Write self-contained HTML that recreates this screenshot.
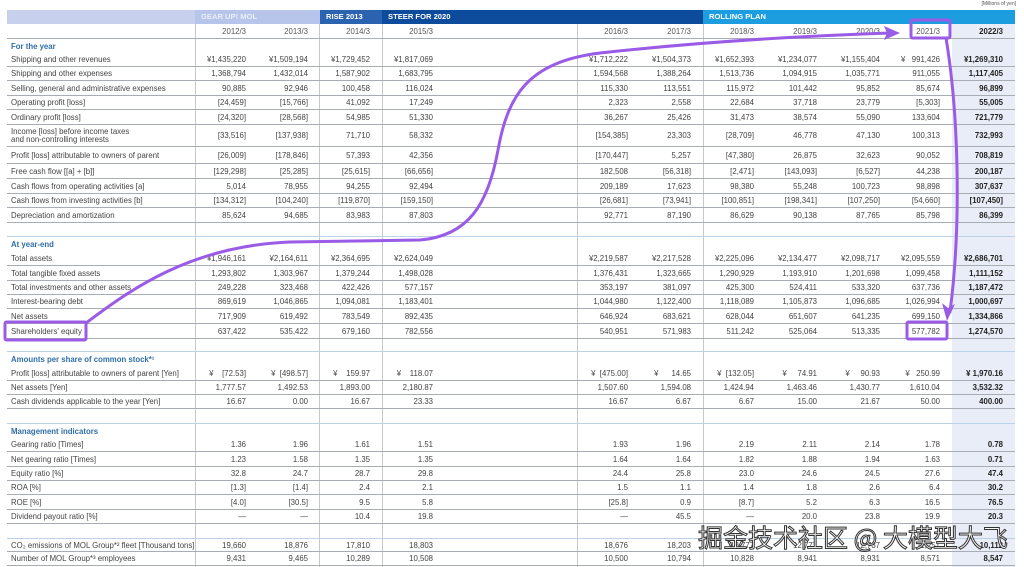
<!DOCTYPE html><html><head><meta charset="utf-8"><style>
*{margin:0;padding:0;box-sizing:border-box}
body{width:1024px;height:567px;background:#fff;position:relative;overflow:hidden;font-family:"Liberation Sans",sans-serif;font-size:7.8px;color:#444}
.r{position:absolute;left:7px;width:1008px;display:grid;grid-template-columns:188px 63px 62px 62px 63px 132px 63px 63px 63px 63px 63px 60px 63px;align-items:center;border-bottom:1px solid #a8adb4}
.r>span{text-align:right;padding-right:12px;white-space:nowrap}
.r>span:first-child{text-align:left;padding-left:4px}
.r>span:last-child{font-weight:bold;color:#222}
.nb{border-bottom:none}
.r>span.h{color:#2f6ea8 !important;font-weight:bold}
.vl{position:absolute;top:24px;height:543px;width:1px;background:#c4c8ce}
.band{position:absolute;top:10px;height:14px;color:#fff;font-weight:bold;font-size:7.6px;line-height:14px;padding-left:6px}
.sec{position:absolute;left:7px;width:1008px;height:1px;background:#bcd2e6}
.w{position:absolute;left:698px;top:519px;font-family:"Noto Sans CJK SC",sans-serif;font-size:25px;color:#fff;-webkit-text-stroke:1px #333;white-space:nowrap}
</style></head><body>
<div style="position:absolute;right:8px;top:1px;font-size:5px;color:#555">[Millions of yen]</div>
<div style="position:absolute;left:952px;top:24px;width:63px;height:543px;background:#e9edf8"></div>
<div class="band" style="left:7px;width:188px;background:#c7d1ee"></div>
<div class="band" style="left:195px;width:125px;background:#b7c5ea;color:#e8eefb">GEAR UP! MOL</div>
<div class="band" style="left:320px;width:62px;background:#2a63b0">RISE 2013</div>
<div class="band" style="left:382px;width:321px;background:#0d4c9c">STEER FOR 2020</div>
<div class="band" style="left:703px;width:312px;background:#1c9de0">ROLLING PLAN</div>
<div class="vl" style="left:195px"></div><div class="vl" style="left:319px"></div><div class="vl" style="left:382px"></div><div class="vl" style="left:577px"></div><div class="vl" style="left:703px"></div>

<div class="r" style="top:24px;height:15px;color:#555"><span></span><span>2012/3</span><span>2013/3</span><span>2014/3</span><span>2015/3</span><span></span><span>2016/3</span><span>2017/3</span><span>2018/3</span><span>2019/3</span><span>2020/3</span><span>2021/3</span><span>2022/3</span></div>
<div class="r nb" style="top:39px;height:14px"><span class="h">For the year</span></div>
<div class="r" style="top:53px;height:14px"><span>Shipping and other revenues</span><span>¥1,435,220</span><span>¥1,509,194</span><span>¥1,729,452</span><span>¥1,817,069</span><span></span><span>¥1,712,222</span><span>¥1,504,373</span><span>¥1,652,393</span><span>¥1,234,077</span><span>¥1,155,404</span><span>¥ &nbsp;&nbsp;991,426</span><span>¥1,269,310</span></div>
<div class="r" style="top:67px;height:14px"><span>Shipping and other expenses</span><span>1,368,794</span><span>1,432,014</span><span>1,587,902</span><span>1,683,795</span><span></span><span>1,594,568</span><span>1,388,264</span><span>1,513,736</span><span>1,094,915</span><span>1,035,771</span><span>911,055</span><span>1,117,405</span></div>
<div class="r" style="top:81px;height:15px"><span>Selling, general and administrative expenses</span><span>90,885</span><span>92,946</span><span>100,458</span><span>116,024</span><span></span><span>115,330</span><span>113,551</span><span>115,972</span><span>101,442</span><span>95,852</span><span>85,674</span><span>96,899</span></div>
<div class="r" style="top:96px;height:14px"><span>Operating profit [loss]</span><span>[24,459]</span><span>[15,766]</span><span>41,092</span><span>17,249</span><span></span><span>2,323</span><span>2,558</span><span>22,684</span><span>37,718</span><span>23,779</span><span>[5,303]</span><span>55,005</span></div>
<div class="r" style="top:110px;height:15px"><span>Ordinary profit [loss]</span><span>[24,320]</span><span>[28,568]</span><span>54,985</span><span>51,330</span><span></span><span>36,267</span><span>25,426</span><span>31,473</span><span>38,574</span><span>55,090</span><span>133,604</span><span>721,779</span></div>
<div class="r" style="top:125px;height:22px"><span style="line-height:8px">Income [loss] before income taxes<br>and non-controlling interests</span><span>[33,516]</span><span>[137,938]</span><span>71,710</span><span>58,332</span><span></span><span>[154,385]</span><span>23,303</span><span>[28,709]</span><span>46,778</span><span>47,130</span><span>100,313</span><span>732,993</span></div>
<div class="r" style="top:147px;height:17px"><span>Profit [loss] attributable to owners of parent</span><span>[26,009]</span><span>[178,846]</span><span>57,393</span><span>42,356</span><span></span><span>[170,447]</span><span>5,257</span><span>[47,380]</span><span>26,875</span><span>32,623</span><span>90,052</span><span>708,819</span></div>
<div class="r" style="top:164px;height:15px"><span>Free cash flow [[a] + [b]]</span><span>[129,298]</span><span>[25,285]</span><span>[25,615]</span><span>[66,656]</span><span></span><span>182,508</span><span>[56,318]</span><span>[2,471]</span><span>[143,093]</span><span>[6,527]</span><span>44,238</span><span>200,187</span></div>
<div class="r" style="top:179px;height:15px"><span>Cash flows from operating activities [a]</span><span>5,014</span><span>78,955</span><span>94,255</span><span>92,494</span><span></span><span>209,189</span><span>17,623</span><span>98,380</span><span>55,248</span><span>100,723</span><span>98,898</span><span>307,637</span></div>
<div class="r" style="top:194px;height:14px"><span>Cash flows from investing activities [b]</span><span>[134,312]</span><span>[104,240]</span><span>[119,870]</span><span>[159,150]</span><span></span><span>[26,681]</span><span>[73,941]</span><span>[100,851]</span><span>[198,341]</span><span>[107,250]</span><span>[54,660]</span><span>[107,450]</span></div>
<div class="r" style="top:208px;height:15px"><span>Depreciation and amortization</span><span>85,624</span><span>94,685</span><span>83,983</span><span>87,803</span><span></span><span>92,771</span><span>87,190</span><span>86,629</span><span>90,138</span><span>87,765</span><span>85,798</span><span>86,399</span></div>
<div class="sec" style="top:236px"></div>
<div class="r nb" style="top:237px;height:14px"><span class="h">At year-end</span></div>
<div class="r" style="top:251px;height:15px"><span>Total assets</span><span>¥1,946,161</span><span>¥2,164,611</span><span>¥2,364,695</span><span>¥2,624,049</span><span></span><span>¥2,219,587</span><span>¥2,217,528</span><span>¥2,225,096</span><span>¥2,134,477</span><span>¥2,098,717</span><span>¥2,095,559</span><span>¥2,686,701</span></div>
<div class="r" style="top:266px;height:15px"><span>Total tangible fixed assets</span><span>1,293,802</span><span>1,303,967</span><span>1,379,244</span><span>1,498,028</span><span></span><span>1,376,431</span><span>1,323,665</span><span>1,290,929</span><span>1,193,910</span><span>1,201,698</span><span>1,099,458</span><span>1,111,152</span></div>
<div class="r" style="top:281px;height:14px"><span>Total investments and other assets</span><span>249,228</span><span>323,468</span><span>422,426</span><span>577,157</span><span></span><span>353,197</span><span>381,097</span><span>425,300</span><span>524,411</span><span>533,320</span><span>637,736</span><span>1,187,472</span></div>
<div class="r" style="top:295px;height:14px"><span>Interest-bearing debt</span><span>869,619</span><span>1,046,865</span><span>1,094,081</span><span>1,183,401</span><span></span><span>1,044,980</span><span>1,122,400</span><span>1,118,089</span><span>1,105,873</span><span>1,096,685</span><span>1,026,994</span><span>1,000,697</span></div>
<div class="r" style="top:309px;height:15px"><span>Net assets</span><span>717,909</span><span>619,492</span><span>783,549</span><span>892,435</span><span></span><span>646,924</span><span>683,621</span><span>628,044</span><span>651,607</span><span>641,235</span><span>699,150</span><span>1,334,866</span></div>
<div class="r" style="top:324px;height:15px"><span>Shareholders' equity</span><span>637,422</span><span>535,422</span><span>679,160</span><span>782,556</span><span></span><span>540,951</span><span>571,983</span><span>511,242</span><span>525,064</span><span>513,335</span><span>577,782</span><span>1,274,570</span></div>
<div class="sec" style="top:351px"></div>
<div class="r nb" style="top:352px;height:14px"><span class="h">Amounts per share of common stock*¹</span></div>
<div class="r" style="top:366px;height:15px"><span>Profit [loss] attributable to owners of parent [Yen]</span><span>¥ &nbsp;&nbsp;&nbsp;[72.53]</span><span>¥ &nbsp;[498.57]</span><span>¥ &nbsp;&nbsp;&nbsp;159.97</span><span>¥ &nbsp;&nbsp;&nbsp;118.07</span><span></span><span>¥ &nbsp;[475.00]</span><span>¥ &nbsp;&nbsp;&nbsp;&nbsp;&nbsp;14.65</span><span>¥ &nbsp;[132.05]</span><span>¥ &nbsp;&nbsp;&nbsp;&nbsp;74.91</span><span>¥ &nbsp;&nbsp;&nbsp;&nbsp;90.93</span><span>¥ &nbsp;&nbsp;250.99</span><span>¥ 1,970.16</span></div>
<div class="r" style="top:381px;height:14px"><span>Net assets [Yen]</span><span>1,777.57</span><span>1,492.53</span><span>1,893.00</span><span>2,180.87</span><span></span><span>1,507.60</span><span>1,594.08</span><span>1,424.94</span><span>1,463.46</span><span>1,430.77</span><span>1,610.04</span><span>3,532.32</span></div>
<div class="r" style="top:395px;height:14px"><span>Cash dividends applicable to the year [Yen]</span><span>16.67</span><span>0.00</span><span>16.67</span><span>23.33</span><span></span><span>16.67</span><span>6.67</span><span>6.67</span><span>15.00</span><span>21.67</span><span>50.00</span><span>400.00</span></div>
<div class="sec" style="top:423px"></div>
<div class="r nb" style="top:424px;height:14px"><span class="h">Management indicators</span></div>
<div class="r" style="top:438px;height:14px"><span>Gearing ratio [Times]</span><span>1.36</span><span>1.96</span><span>1.61</span><span>1.51</span><span></span><span>1.93</span><span>1.96</span><span>2.19</span><span>2.11</span><span>2.14</span><span>1.78</span><span>0.78</span></div>
<div class="r" style="top:452px;height:15px"><span>Net gearing ratio [Times]</span><span>1.23</span><span>1.58</span><span>1.35</span><span>1.35</span><span></span><span>1.64</span><span>1.64</span><span>1.82</span><span>1.88</span><span>1.94</span><span>1.63</span><span>0.71</span></div>
<div class="r" style="top:467px;height:14px"><span>Equity ratio [%]</span><span>32.8</span><span>24.7</span><span>28.7</span><span>29.8</span><span></span><span>24.4</span><span>25.8</span><span>23.0</span><span>24.6</span><span>24.5</span><span>27.6</span><span>47.4</span></div>
<div class="r" style="top:481px;height:14px"><span>ROA [%]</span><span>[1.3]</span><span>[1.4]</span><span>2.4</span><span>2.1</span><span></span><span>1.5</span><span>1.1</span><span>1.4</span><span>1.8</span><span>2.6</span><span>6.4</span><span>30.2</span></div>
<div class="r" style="top:495px;height:15px"><span>ROE [%]</span><span>[4.0]</span><span>[30.5]</span><span>9.5</span><span>5.8</span><span></span><span>[25.8]</span><span>0.9</span><span>[8.7]</span><span>5.2</span><span>6.3</span><span>16.5</span><span>76.5</span></div>
<div class="r" style="top:510px;height:14px"><span>Dividend payout ratio [%]</span><span>—</span><span>—</span><span>10.4</span><span>19.8</span><span></span><span>—</span><span>45.5</span><span>—</span><span>20.0</span><span>23.8</span><span>19.9</span><span>20.3</span></div>
<div class="r" style="top:538px;height:14px;border-top:1px solid #bcd2e6"><span>CO₂ emissions of MOL Group*² fleet [Thousand tons]</span><span>19,660</span><span>18,876</span><span>17,810</span><span>18,803</span><span></span><span>18,676</span><span>18,203</span><span>12,777</span><span>12,777</span><span>12,737</span><span>11,251</span><span>10,112</span></div>
<div class="r" style="top:552px;height:14px"><span>Number of MOL Group*³ employees</span><span>9,431</span><span>9,465</span><span>10,289</span><span>10,508</span><span></span><span>10,500</span><span>10,794</span><span>10,828</span><span>8,941</span><span>8,931</span><span>8,571</span><span>8,547</span></div>

<svg style="position:absolute;left:0;top:0" width="1024" height="567">
<g fill="none" stroke="#9a5ce6" stroke-width="3" stroke-linecap="round">
<rect x="5" y="322" width="81" height="18" rx="1.5"/>
<rect x="911" y="20" width="39" height="18" rx="1.5"/>
<rect x="907" y="322" width="40" height="17" rx="1.5"/>
<path d="M86,323 C130,290 190,246 290,242 L420,240 C468,236 488,205 498,150 C508,95 528,62 600,53 C700,42 800,36 890,33"/>
<path d="M946,38 C958,110 962,220 950,312"/>
</g>
<g fill="#9a5ce6">
<path d="M900,33 L884,26 L887,33 L884,40 Z"/>
<path d="M947,321 L942,303 L948,308 L955,304 Z"/>
</g>
</svg>
<div class="w">掘金技术社区 @ 大模型大飞</div>
</body></html>
